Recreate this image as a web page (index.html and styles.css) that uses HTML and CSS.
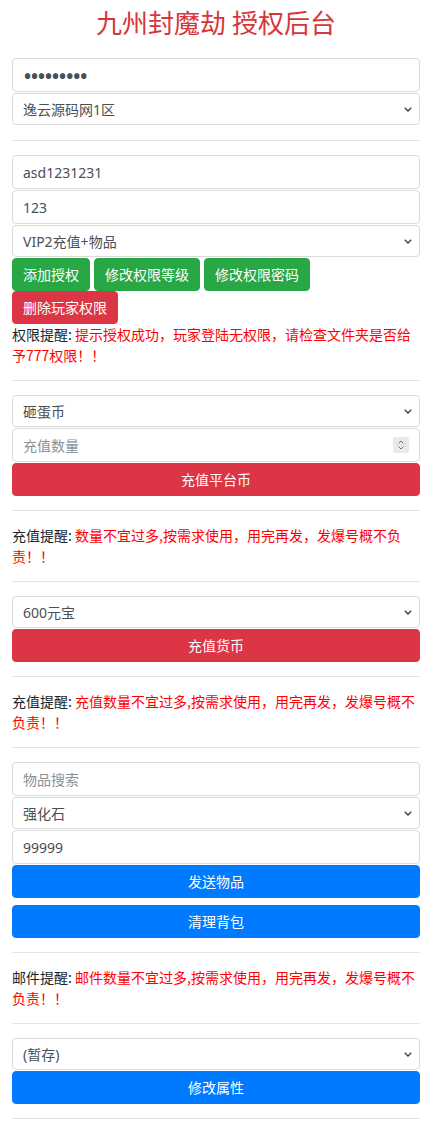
FILE: index.html
```html
<!DOCTYPE html>
<html lang="zh-CN">
<head>
<meta charset="utf-8">
<title>九州封魔劫 授权后台</title>
<link rel="stylesheet" href="styles.css">
</head>
<body>
<div class="page">
  <h1 class="title">九州封魔劫 授权后台</h1>

  <section class="group">
    <input class="field field-pass" type="password" value="123456789">
    <select class="pick"><option>逸云源码网1区</option></select>
  </section>

  <hr class="rule">

  <section class="group">
    <input class="field" type="text" value="asd1231231">
    <input class="field" type="text" value="123">
    <select class="pick"><option>VIP2充值+物品</option></select>
    <div class="btn-row">
      <button class="btn btn-green">添加授权</button>
      <button class="btn btn-green">修改权限等级</button>
      <button class="btn btn-green">修改权限密码</button>
    </div>
    <div class="btn-row">
      <button class="btn btn-red">删除玩家权限</button>
    </div>
    <p class="note"><span class="note-label">权限提醒: </span>提示授权成功，玩家登陆无权限，请检查文件夹是否给予777权限！！</p>
  </section>

  <hr class="rule">

  <section class="group">
    <select class="pick"><option>砸蛋币</option></select>
    <div class="num-wrap">
      <input class="field" type="text" placeholder="充值数量">
      <span class="spin" aria-hidden="true">
        <svg width="16" height="16" viewBox="0 0 16 16"><path d="M5.5 6.5L8 4l2.5 2.5M5.5 9.5L8 12l2.5-2.5" fill="none" stroke="#777" stroke-width="1"/></svg>
      </span>
    </div>
    <button class="btn btn-red btn-block">充值平台币</button>
  </section>

  <hr class="rule">

  <p class="note"><span class="note-label">充值提醒: </span>数量不宜过多,按需求使用，用完再发，发爆号概不负责！！</p>

  <hr class="rule">

  <section class="group">
    <select class="pick"><option>600元宝</option></select>
    <button class="btn btn-red btn-block">充值货币</button>
  </section>

  <hr class="rule">

  <p class="note"><span class="note-label">充值提醒: </span>充值数量不宜过多,按需求使用，用完再发，发爆号概不负责！！</p>

  <hr class="rule">

  <section class="group">
    <input class="field" type="text" placeholder="物品搜索">
    <select class="pick"><option>强化石</option></select>
    <input class="field" type="text" value="99999">
    <button class="btn btn-blue btn-block">发送物品</button>
    <button class="btn btn-blue btn-block btn-gap">清理背包</button>
  </section>

  <hr class="rule">

  <p class="note"><span class="note-label">邮件提醒: </span>邮件数量不宜过多,按需求使用，用完再发，发爆号概不负责！！</p>

  <hr class="rule">

  <section class="group">
    <select class="pick"><option>(暂存)</option></select>
    <button class="btn btn-blue btn-block">修改属性</button>
  </section>

  <hr class="rule">
</div>
</body>
</html>
```

FILE: styles.css
```css
* {
  box-sizing: border-box;
}

html, body {
  margin: 0;
  padding: 0;
  background: #fff;
}

body {
  font-family: "Noto Sans CJK SC", sans-serif;
  font-size: 14px;
  color: #212529;
}

.page {
  padding: 0 12px;
}

.title {
  margin: 6px 0 20px;
  font-size: 26px;
  line-height: 32px;
  font-weight: 400;
  text-align: center;
  color: #d6363c;
  font-family: "Noto Sans CJK SC", sans-serif;
}

.group {
  display: flex;
  flex-direction: column;
}

.field,
.pick {
  display: block;
  width: 100%;
  margin: 0 0 1px;
  padding: 0 10px;
  border: 1px solid #dadada;
  border-radius: 4px;
  background-color: #fff;
  color: #495057;
  font-family: "Noto Sans", "Noto Sans CJK SC", sans-serif;
  font-size: 14px;
  outline: none;
}

.field {
  height: 34px;
}

.field::placeholder {
  color: #8a9096;
}

.field-pass {
  font-size: 24px;
  letter-spacing: -2px;
  color: #495057;
}

.pick {
  height: 32px;
  padding-right: 24px;
  -webkit-appearance: none;
  appearance: none;
  background-image: url("data:image/svg+xml,%3csvg xmlns='http://www.w3.org/2000/svg' width='8' height='5' viewBox='0 0 8 5'%3e%3cpath fill='none' stroke='%23343a40' stroke-width='1.3' d='M0.8 0.8l3.2 3.2 3.2-3.2'/%3e%3c/svg%3e");
  background-repeat: no-repeat;
  background-position: right 7px center;
  background-size: 8px 5px;
}

.num-wrap {
  position: relative;
}

.spin {
  position: absolute;
  right: 11px;
  top: 9px;
  width: 16px;
  height: 16px;
  background: #e9e9ed;
  border-radius: 2px;
  display: flex;
}

.btn-row {
  display: flex;
  gap: 4px;
}

.btn {
  height: 33px;
  padding: 0 10px;
  border: 1px solid transparent;
  border-radius: 4px;
  color: #fff;
  font-family: "Noto Sans CJK SC", sans-serif;
  font-size: 14px;
  line-height: 19px;
  cursor: pointer;
  white-space: nowrap;
}

.btn-block {
  display: block;
  width: 100%;
}

.btn-gap {
  margin-top: 7px;
}

.btn-green {
  background: #28a745;
  border-color: #28a745;
}

.btn-red {
  background: #dc3545;
  border-color: #dc3545;
}

.btn-blue {
  background: #007bff;
  border-color: #007bff;
}

.note {
  margin: 0;
  line-height: 21px;
  font-size: 14px;
  font-family: "Noto Sans CJK SC", sans-serif;
  color: #ff0000;
}

.note-label {
  color: #212529;
}

.rule {
  margin: 14px 0;
  border: 0;
  border-top: 1px solid #e3e3e3;
  height: 0;
}
```
